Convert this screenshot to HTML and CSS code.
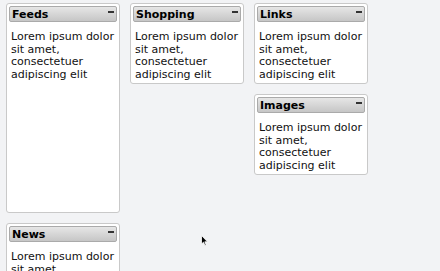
FILE: index.html
```html
<!DOCTYPE html>
<html lang="en">
<head>
    <meta charset="UTF-8">
    <title>Portlets</title>
    <link rel="stylesheet" href="styles.css">
</head>
<body>
    <div class="board">
        <div class="column">
            <div class="portlet tall">
                <div class="portlet-header"><span>Feeds</span><span class="toggle"></span></div>
                <div class="portlet-content">Lorem ipsum dolor sit amet, consectetuer adipiscing elit</div>
            </div>
            <div class="portlet">
                <div class="portlet-header"><span>News</span><span class="toggle"></span></div>
                <div class="portlet-content">Lorem ipsum dolor sit amet, consectetuer adipiscing elit</div>
            </div>
        </div>
        <div class="column">
            <div class="portlet">
                <div class="portlet-header"><span>Shopping</span><span class="toggle"></span></div>
                <div class="portlet-content">Lorem ipsum dolor sit amet, consectetuer adipiscing elit</div>
            </div>
        </div>
        <div class="column">
            <div class="portlet">
                <div class="portlet-header"><span>Links</span><span class="toggle"></span></div>
                <div class="portlet-content">Lorem ipsum dolor sit amet, consectetuer adipiscing elit</div>
            </div>
            <div class="portlet">
                <div class="portlet-header"><span>Images</span><span class="toggle"></span></div>
                <div class="portlet-content">Lorem ipsum dolor sit amet, consectetuer adipiscing elit</div>
            </div>
        </div>
    </div>
    <!-- mouse pointer -->
    <svg class="cursor" width="8" height="12" viewBox="0 0 8 12">
        <path d="M0.5 0.5 L0.5 9 L2.5 7.2 L4 10.5 L5.2 10 L3.8 6.8 L6.5 6.8 Z" fill="#000" stroke="#fff" stroke-width="0.8"/>
    </svg>
</body>
</html>
```

FILE: styles.css
```css
body {
    margin: 0;
    background: #f2f3f5;
    font-family: "DejaVu Sans", Verdana, sans-serif;
    font-size: 11px;
    color: #111;
    height: 271px;
    overflow: hidden;
}
.board {
    display: flex;
    gap: 10px;
    padding: 3px 0 0 6px;
}
.column {
    width: 114px;
    display: flex;
    flex-direction: column;
    gap: 10px;
}
.portlet {
    background: #fff;
    border: 1px solid #c9c9c9;
    border-radius: 3px;
    padding: 2px;
}
.portlet.tall {
    height: 204px;
}
.portlet-header {
    display: flex;
    justify-content: space-between;
    align-items: center;
    height: 14px;
    padding: 0 2px 0 2px;
    border: 1px solid #aaa;
    border-radius: 2px;
    background: linear-gradient(#e6e6e6, #c6c6c6);
    font-weight: bold;
    color: #000;
}
.toggle {
    width: 6px;
    height: 2px;
    background: #333;
    margin-top: -4px;
}
.portlet-content {
    padding: 9px 2px 0;
    line-height: 12.5px;
}
.cursor {
    position: absolute;
    left: 201px;
    top: 235px;
}
```
